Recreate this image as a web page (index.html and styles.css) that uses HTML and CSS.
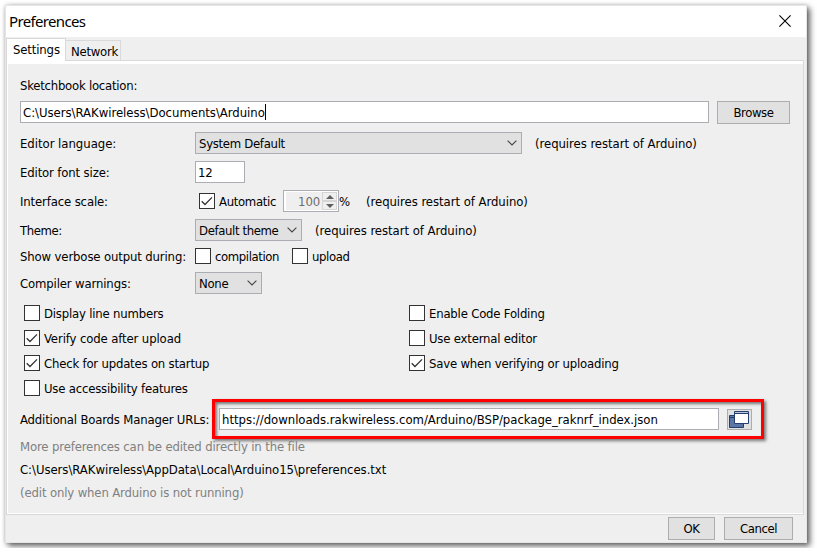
FILE: index.html
```html
<!DOCTYPE html>
<html lang="en">
<head>
<meta charset="utf-8">
<title>Preferences</title>
<link rel="stylesheet" href="styles.css">
</head>
<body>
<svg class="defs" width="0" height="0" aria-hidden="true">
  <symbol id="tick" viewBox="0 0 14 14"><path d="M1.7 7.2 5 10.5 12 3.4" fill="none" stroke="#333" stroke-width="1.3"/></symbol>
  <symbol id="chevron" viewBox="0 0 10 6"><path d="M.6.7 5 5 9.4.7" fill="none" stroke="#444" stroke-width="1.1"/></symbol>
</svg>
<main class="window">
  <header class="titlebar">
    <h1 class="title">Preferences</h1>
    <svg class="close" viewBox="0 0 12 12"><path d="M.4.4 11.6 11.6M11.6.4.4 11.6" stroke="#000" stroke-width="1.1"/></svg>
  </header>
  <nav class="tabs">
    <span class="tab tab-active">Settings</span><span class="tab">Network</span>
  </nav>
  <section class="panel">
    <div class="row row-heading"><span class="snug">Sketchbook location:</span></div>
    <div class="row row-location">
      <div class="field field-location"><span class="wide">C:\Users\RAKwireless\Documents\Arduino</span><i class="caret"></i></div>
      <div class="button button-browse tight"><span>Browse</span></div>
    </div>
    <div class="row">
      <span class="label wide">Editor language:</span>
      <div class="combo combo-language"><span>System Default</span><svg class="chevron"><use href="#chevron"/></svg></div>
      <span class="hint">(requires restart of Arduino)</span>
    </div>
    <div class="row">
      <span class="label">Editor font size:</span>
      <div class="field field-size"><span>12</span></div>
    </div>
    <div class="row">
      <span class="label">Interface scale:</span>
      <i class="check check-scale"><svg><use href="#tick"/></svg></i><span class="automatic">Automatic</span>
      <div class="spinner"><span class="spinner-value">100</span><div class="arrows"><i class="arrow arrow-up"></i><i class="arrow arrow-down"></i></div></div>
      <span class="percent">%</span>
      <span class="hint hint-scale">(requires restart of Arduino)</span>
    </div>
    <div class="row">
      <span class="label tight">Theme:</span>
      <div class="combo combo-theme"><span>Default theme</span><svg class="chevron"><use href="#chevron"/></svg></div>
      <span class="hint">(requires restart of Arduino)</span>
    </div>
    <div class="row row-verbose">
      <span class="label">Show verbose output during:</span>
      <i class="check"></i><span class="option compilation">compilation</span>
      <i class="check"></i><span class="option upload">upload</span>
    </div>
    <div class="row row-warnings">
      <span class="label">Compiler warnings:</span>
      <div class="combo combo-warnings"><span>None</span><svg class="chevron"><use href="#chevron"/></svg></div>
    </div>
    <div class="options">
      <div class="item"><i class="check"></i><span class="option">Display line numbers</span></div>
      <div class="item"><i class="check"></i><span class="option">Enable Code Folding</span></div>
      <div class="item"><i class="check"><svg><use href="#tick"/></svg></i><span class="option verify">Verify code after upload</span></div>
      <div class="item"><i class="check"></i><span class="option">Use external editor</span></div>
      <div class="item"><i class="check"><svg><use href="#tick"/></svg></i><span class="option">Check for updates on startup</span></div>
      <div class="item"><i class="check"><svg><use href="#tick"/></svg></i><span class="option">Save when verifying or uploading</span></div>
      <div class="item"><i class="check"></i><span class="option">Use accessibility features</span></div>
    </div>
    <div class="row row-urls">
      <span class="urls-label">Additional Boards Manager URLs:</span>
      <div class="highlight">
        <div class="field field-urls"><span class="wide">https://downloads.rakwireless.com/Arduino/BSP/package_raknrf_index.json</span></div>
        <div class="button button-icon">
          <svg width="20" height="17" viewBox="0 0 20 17"><path d="M.5 4.5h14v12H.5z" fill="#5b76a5" stroke="#243e70"/><path d="M1 6.5h5" stroke="#243e70"/><path d="M5.5.5h14v12h-14z" fill="#fff" stroke="#243e70"/><path d="M6 1.5h13" stroke="#b9c5da"/><path d="M6 2.5h13" stroke="#243e70"/></svg>
        </div>
      </div>
    </div>
    <div class="notes">
      <p class="muted">More preferences can be edited directly in the file</p>
      <p class="file">C:\Users\RAKwireless\AppData\Local\Arduino15\preferences.txt</p>
      <p class="muted">(edit only when Arduino is not running)</p>
    </div>
  </section>
  <footer class="actions">
    <div class="button button-ok tight"><span>OK</span></div>
    <div class="button button-cancel tight"><span>Cancel</span></div>
  </footer>
</main>
</body>
</html>
```
FILE: styles.css
```css
* { box-sizing: border-box; }
body { margin: 0; padding: 5px; background: #fff; overflow: hidden; color: #000;
  font: 13px/22px "DejaVu Sans Condensed", "DejaVu Sans", sans-serif; font-stretch: condensed; letter-spacing: -.14px; white-space: nowrap; }
.wide { letter-spacing: -.03px; }
.tight { letter-spacing: -.42px; }
.snug { letter-spacing: -.24px; }
.defs { position: absolute; }
.window { width: 802px; height: 538px; background: #efefef; border: 1px solid #e6e6e6;
  box-shadow: 3px 3px 6px rgba(0,0,0,.6), 0 0 4px rgba(0,0,0,.2); }
.titlebar { height: 31px; background: #fff; display: flex; justify-content: space-between; padding: 0 15px 0 3px; }
.title { margin: 0; font: 400 15px/31px "Noto Sans", sans-serif; letter-spacing: -.65px; }
.close { width: 12px; height: 12px; margin-top: 9px; }
.tabs { display: flex; align-items: flex-end; height: 23px; padding-top: 1px; }
.tab { height: 20px; width: 55px; border: 1px solid #d9d9d9; border-left: 0; border-bottom: 0; padding-left: 5px; line-height: 21px; letter-spacing: -.25px; }
.tab-active { width: 60px; height: 23px; margin-bottom: -1px; padding-left: 6px; background: #fff; border-left: 1px solid #d9d9d9; position: relative; letter-spacing: -.14px; }
.panel { width: 798px; height: 455px; border: 1px solid #d9d9d9; box-shadow: inset 0 3px #fff, inset 1px -1px #fff; padding: 11px 0 0 13px; }
.row { display: flex; height: 29px; align-items: flex-start; line-height: 24px; }
.row-heading { padding-top: 3px; line-height: 22px; }
.row-location { height: 31px; }
.field, .combo, .button { height: 22px; border: 1px solid #abadb3; line-height: 22px; display: flex; flex: none; }
.field { background: #fff; padding-left: 2px; }
.field-location { width: 689px; margin-right: 8px; }
.caret { width: 1px; height: 16px; margin-top: 2px; background: #000; }
.button { background: #e1e1e1; border-color: #adadad; height: 23px; line-height: 21px; justify-content: center; align-items: center; }
.button-browse { width: 73px; }
.label { width: 175px; flex: none; }
.combo { background: #e1e1e1; justify-content: space-between; align-items: flex-start; padding: 0 4px 0 3px; letter-spacing: -.3px; }
.combo-language { width: 327px; }
.combo-theme { width: 107px; letter-spacing: -.37px; }
.combo-warnings { width: 67px; }
.chevron { width: 10px; height: 6px; margin-top: 7px; }
.hint { margin-left: 13px; letter-spacing: -.05px; }
.field-size { width: 50px; }
.check { width: 16px; height: 16px; border: 1px solid #333; background: #fff; display: block; flex: none; }
.check svg { display: block; width: 14px; height: 14px; }
.check-scale { margin: 3px 4px 0; }
.automatic { width: 64px; letter-spacing: -.33px; }
.spinner { width: 56px; height: 22px; border: 1px solid #abadb3; background: #fff; display: flex; flex: none; padding: 1px 1px 1px 2px; }
.spinner-value { background: #efefef; color: #6d6d6d; width: 36px; line-height: 20px; height: 18px; text-align: right; padding-right: 2px; }
.arrows { width: 15px; display: flex; flex-direction: column; }
.arrow { flex: 1; background: #efefef; border: 1px solid #d5d5d5; display: flex; align-items: center; justify-content: center; }
.arrow::before { content: ""; border: solid transparent; border-width: 0 4px 4px; border-bottom-color: #606060; }
.arrow-down::before { border-width: 4px 4px 0; border-top-color: #606060; }
.percent { width: 12px; }
.hint-scale { margin-left: 15px; }
.row-verbose { height: 24px; line-height: 18px; }
.option { margin-left: 4px; letter-spacing: -.2px; }
.compilation { width: 77px; letter-spacing: -.4px; }
.upload { letter-spacing: -.4px; }
.verify { letter-spacing: -.12px; }
.row-warnings { height: 33px; }
.options { display: grid; grid-template-columns: 385px 385px; grid-auto-rows: 25px; height: 94px; padding-left: 4px; line-height: 18px; }
.item { display: flex; }
.row-urls { height: 40px; line-height: 42px; }
.urls-label { width: 192px; letter-spacing: -.18px; }
.highlight { width: 552px; height: 40px; border: 3px solid #f00; display: flex; align-items: flex-start; padding: 6px 0 0 4px;
  box-shadow: 2px 2px 3px rgba(0,0,0,.5), inset 2px 2px 3px rgba(0,0,0,.5); }
.field-urls { width: 500px; margin-right: 8px; }
.button-icon { width: 25px; height: 21px; margin-top: 1px; padding: 1px 0 0 1px; align-items: flex-start; justify-content: flex-start; }
.notes { line-height: 23px; margin-top: -4px; }
.notes p { margin: 0; }
.file { letter-spacing: -.05px; }
.muted { color: #808080; }
.actions { display: flex; justify-content: flex-end; gap: 9px; padding: 2px 13px 0 0; }
.button-ok { width: 47px; }
.button-cancel { width: 69px; }
```
